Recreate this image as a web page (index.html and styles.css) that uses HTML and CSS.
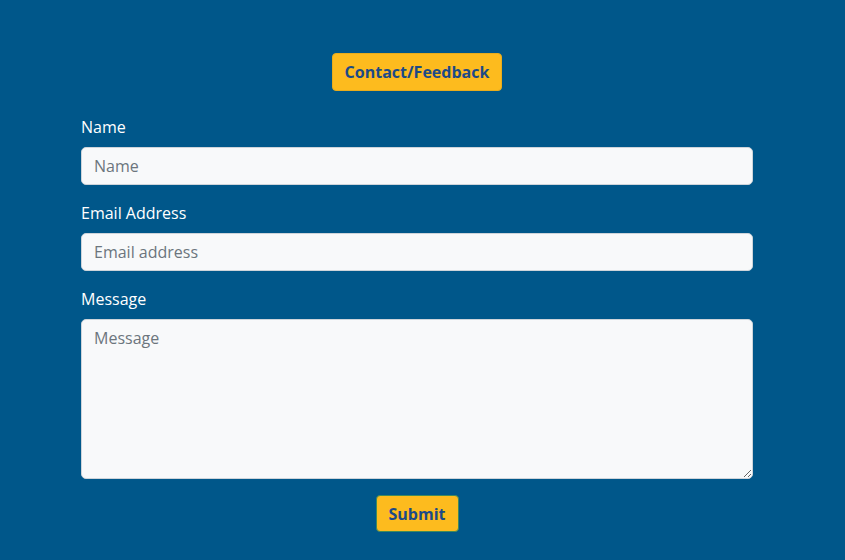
FILE: index.html
```html
<!DOCTYPE html>
<html lang="en">
<head>
<meta charset="utf-8">
<title>Contact/Feedback</title>
<link rel="stylesheet" href="styles.css">
</head>
<body>
<main class="page">
  <div class="heading-row">
    <button class="btn btn-title" type="button">Contact/Feedback</button>
  </div>
  <form class="form">
    <div class="field">
      <label class="label" for="name">Name</label>
      <input class="control" id="name" type="text" placeholder="Name">
    </div>
    <div class="field">
      <label class="label" for="email">Email Address</label>
      <input class="control" id="email" type="email" placeholder="Email address">
    </div>
    <div class="field">
      <label class="label" for="msg">Message</label>
      <textarea class="control textarea" id="msg" placeholder="Message"></textarea>
    </div>
    <div class="submit-row">
      <button class="btn btn-submit" type="button">Submit</button>
    </div>
  </form>
</main>
</body>
</html>
```
FILE: styles.css
```css
* { box-sizing: border-box; }
html, body { margin: 0; height: 100%; }
body {
  background: #00578a;
  font-family: "Open Sans", "DejaVu Sans", sans-serif;
  font-size: 16px;
  line-height: 1.5;
  color: #fff;
}
.page {
  width: 834px;
  padding: 53px 81px 0 81px;
}
.heading-row {
  display: flex;
  justify-content: center;
  margin-bottom: 24px;
}
.btn {
  font-family: "Open Sans", "DejaVu Sans", sans-serif;
  font-weight: 700;
  font-size: 16px;
  line-height: 24px;
  color: #1c4a87;
  background: #fdbb1e;
  border: 1px solid #e9ac1c;
  border-radius: 4px;
  padding: 6px 12px;
  cursor: pointer;
}
.btn-submit {
  border-color: #3f8a5c;
  padding: 6px 12px 5px;
  height: 37px;
}
.form {
  display: flex;
  flex-direction: column;
  gap: 16px;
}
.field {
  display: flex;
  flex-direction: column;
  gap: 8px;
}
.label {
  font-size: 16px;
  line-height: 24px;
  color: #fff;
}
.control {
  display: block;
  width: 100%;
  height: 38px;
  padding: 6px 12px;
  font-family: "Open Sans", "DejaVu Sans", sans-serif;
  font-size: 16px;
  line-height: 24px;
  color: #495057;
  background: #f8f9fa;
  border: 1px solid #ced4da;
  border-radius: 5px;
  outline: none;
}
.control::placeholder { color: #6c757d; opacity: 1; }
.textarea {
  height: 160px;
  resize: vertical;
}
.submit-row {
  display: flex;
  justify-content: center;
}
```
